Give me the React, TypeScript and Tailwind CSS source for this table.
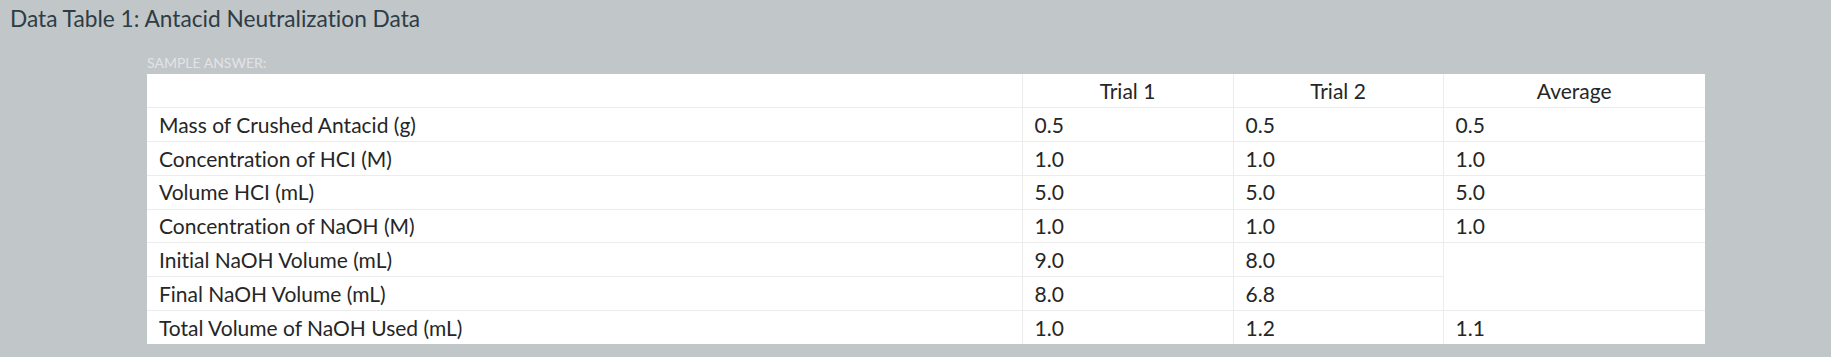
import React from 'react';

type Row = { label: string; t1: string; t2: string; avg?: string; span?: number; skipAvg?: boolean };

const rows: Row[] = [
  { label: 'Mass of Crushed Antacid (g)', t1: '0.5', t2: '0.5', avg: '0.5' },
  { label: 'Concentration of HCI (M)', t1: '1.0', t2: '1.0', avg: '1.0' },
  { label: 'Volume HCI (mL)', t1: '5.0', t2: '5.0', avg: '5.0' },
  { label: 'Concentration of NaOH (M)', t1: '1.0', t2: '1.0', avg: '1.0' },
  { label: 'Initial NaOH Volume (mL)', t1: '9.0', t2: '8.0', avg: '', span: 2 },
  { label: 'Final NaOH Volume (mL)', t1: '8.0', t2: '6.8', skipAvg: true },
  { label: 'Total Volume of NaOH Used (mL)', t1: '1.0', t2: '1.2', avg: '1.1' },
];

const cell = 'border border-[#ececec] px-3 py-0 align-middle';

export default function App() {
  return (
    <div
      className="w-[1831px] h-[357px] bg-[#c1c6c9] overflow-hidden [font-variant-ligatures:none]"
      style={{ fontFamily: 'Lato, "Open Sans", sans-serif' }}
    >
      {/* Title */}
      <h2 className="pl-[10px] pt-[3px] text-[22.7px] leading-[32px] text-[#2e3d45] font-normal">
        Data Table 1: Antacid Neutralization Data
      </h2>

      <div className="pl-[147px] pt-[18px]">
        <div className="text-[14px] leading-[20px] text-[#e1e4e6] uppercase h-[21px]">Sample Answer:</div>

        <table className="w-[1558px] bg-white border-collapse table-fixed text-[21px] text-[#262626]">
          <colgroup>
            <col className="w-[875px]" />
            <col className="w-[211px]" />
            <col className="w-[210px]" />
            <col className="w-[262px]" />
          </colgroup>
          <thead>
            <tr className="h-[33.75px]">
              <th className={cell + ' border-t-0 border-l-0'}></th>
              <th className={cell + ' border-t-0 text-center font-normal'}>Trial 1</th>
              <th className={cell + ' border-t-0 text-center font-normal'}>Trial 2</th>
              <th className={cell + ' border-t-0 border-r-0 text-center font-normal'}>Average</th>
            </tr>
          </thead>
          <tbody>
            {rows.map((r, i) => (
              <tr key={i} className="h-[33.75px]">
                <td className={cell + ' border-l-0' + (i === rows.length - 1 ? ' border-b-0' : '')}>{r.label}</td>
                <td className={cell + (i === rows.length - 1 ? ' border-b-0' : '')}>{r.t1}</td>
                <td className={cell + (i === rows.length - 1 ? ' border-b-0' : '')}>{r.t2}</td>
                {!r.skipAvg && (
                  <td rowSpan={r.span} className={cell + ' border-r-0' + (i === rows.length - 1 ? ' border-b-0' : '')}>
                    {r.avg}
                  </td>
                )}
              </tr>
            ))}
          </tbody>
        </table>
      </div>
    </div>
  );
}
